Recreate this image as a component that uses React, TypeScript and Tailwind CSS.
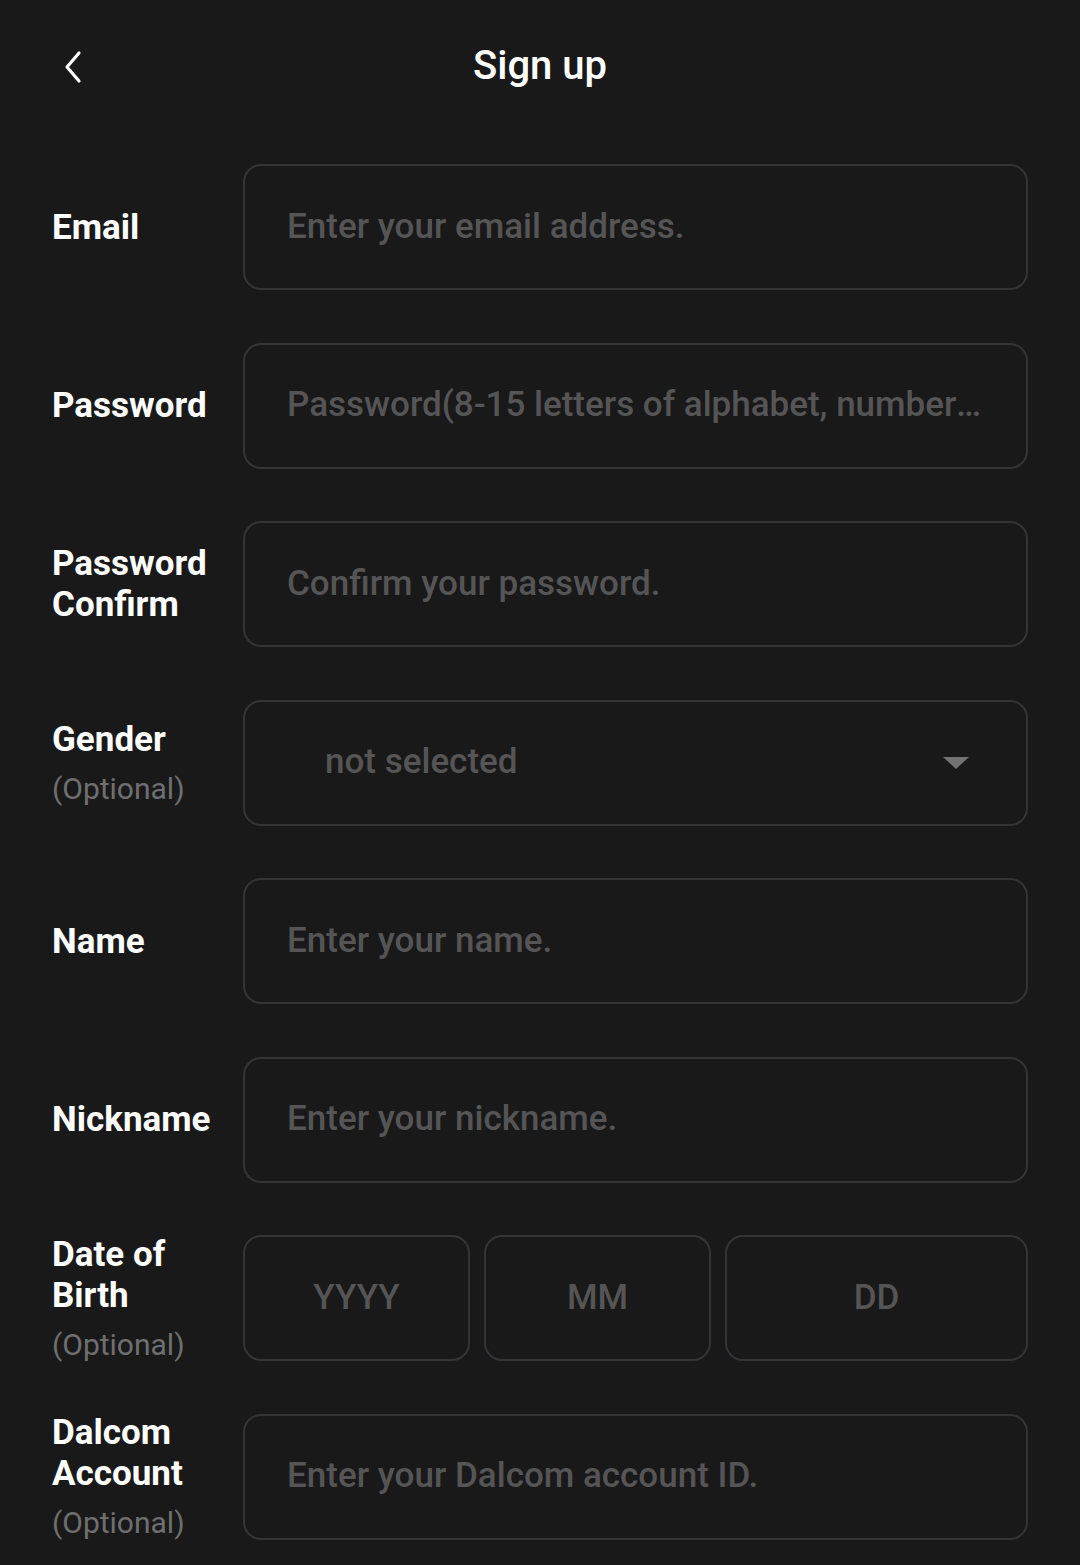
import React from 'react';

type Field = {
    label: string[];
    optional?: boolean;
    placeholder?: string;
    kind?: 'text' | 'select' | 'date';
};

const fields: Field[] = [
    { label: ['Email'], placeholder: 'Enter your email address.' },
    { label: ['Password'], placeholder: 'Password(8-15 letters of alphabet, numbers and special characters)' },
    { label: ['Password', 'Confirm'], placeholder: 'Confirm your password.' },
    { label: ['Gender'], optional: true, kind: 'select' },
    { label: ['Name'], placeholder: 'Enter your name.' },
    { label: ['Nickname'], placeholder: 'Enter your nickname.' },
    { label: ['Date of', 'Birth'], optional: true, kind: 'date' },
    { label: ['Dalcom', 'Account'], optional: true, placeholder: 'Enter your Dalcom account ID.' },
];

const box = 'h-[126px] rounded-[18px] border-2 border-[#353537] bg-[#19191a]';
const hint = 'text-[35px] font-medium text-[#555556]';

function Label({ field }: { field: Field }) {
    return (
        <div className="w-[191px] shrink-0 flex flex-col justify-center">
            {field.label.map((l) => (
                <span key={l} className="text-[35px] leading-[41px] font-bold text-white">{l}</span>
            ))}
            {field.optional && (
                <span className="text-[30px] leading-[36px] mt-[11px] text-[#6f6f70]">(Optional)</span>
            )}
        </div>
    );
}

function Control({ field }: { field: Field }) {
    if (field.kind === 'select') {
        return (
            <div className={`${box} flex-1 flex items-center pl-[80px] pr-[56px]`}>
                <span className={`flex-1 ${hint}`}>not selected</span>
                <svg width="28" height="14" viewBox="0 0 28 14">
                    <path d="M1 1 L27 1 L14 13 Z" fill="#737374" />
                </svg>
            </div>
        );
    }
    if (field.kind === 'date') {
        return (
            <div className="flex-1 flex gap-[14px]">
                <div className={`${box} w-[227px] flex items-center justify-center ${hint}`}>YYYY</div>
                <div className={`${box} w-[227px] flex items-center justify-center ${hint}`}>MM</div>
                <div className={`${box} flex-1 flex items-center justify-center ${hint}`}>DD</div>
            </div>
        );
    }
    return (
        <div className={`${box} flex-1 min-w-0 flex items-center pl-[42px] pr-[44px]`}>
            <span className={`truncate ${hint}`}>{field.placeholder}</span>
        </div>
    );
}

export default function App() {
    return (
        <div className="min-h-[1565px] w-[1080px] bg-[#19191a]" style={{ fontFamily: 'Roboto, "Noto Sans", sans-serif' }}>
            <div className="relative h-[132px] flex items-center justify-center">
                <button className="absolute left-[56px] top-[48px] w-[34px] h-[38px] flex items-center justify-center">
                    <svg width="20" height="34" viewBox="0 0 20 34" fill="none">
                        <path d="M16 3 L4 17 L16 31" stroke="white" strokeWidth="3.2" strokeLinecap="round" strokeLinejoin="round" />
                    </svg>
                </button>
                <h1 className="text-[40px] font-medium text-white">Sign up</h1>
            </div>
            <div className="flex flex-col gap-[52.5px] pt-[32px] pl-[52px] pr-[52px]">
                {fields.map((f, i) => (
                    <div key={i} className="h-[126px] flex items-center">
                        <Label field={f} />
                        <Control field={f} />
                    </div>
                ))}
            </div>
        </div>
    );
}
